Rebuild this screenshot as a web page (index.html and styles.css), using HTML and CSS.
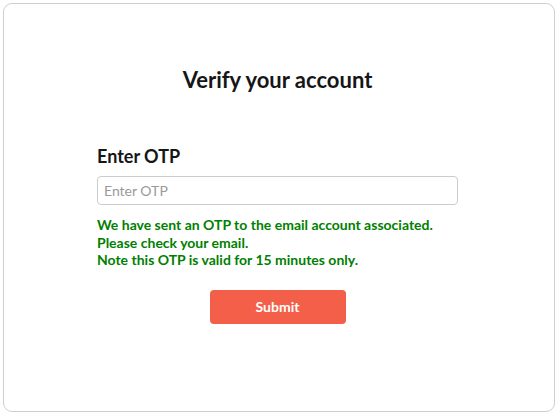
FILE: index.html
```html
<!DOCTYPE html>
<html>
<head>
<meta charset="utf-8">
<link rel="stylesheet" href="styles.css">
</head>
<body>
<div class="card">
  <h1 class="title">Verify your account</h1>
  <form class="form">
    <label class="label" for="otp">Enter OTP</label>
    <input class="input" id="otp" type="text" placeholder="Enter OTP">
    <p class="note">We have sent an OTP to the email account associated.<br>Please check your email.<br>Note this OTP is valid for 15 minutes only.</p>
    <div class="actions"><button class="submit" type="button">Submit</button></div>
  </form>
</div>
</body>
</html>
```
FILE: styles.css
```css
html, body { background: #fff; }
html { overflow: hidden; }
body {
  margin: 3px 0 0 3px;
  font-family: Lato, "Open Sans", sans-serif;
  color: #1a1a1a;
}
.card {
  box-sizing: border-box;
  width: 552px;
  height: 409px;
  border: 1px solid #cfcfcf;
  border-radius: 9px;
  padding-right: 3px;
  display: flex;
  flex-direction: column;
  align-items: center;
}
.title {
  margin: 63px 0 0 0;
  font-size: 22px;
  font-weight: 700;
  line-height: 26px;
  color: #161616;
}
.form {
  width: 361px;
  margin: 0;
  padding-top: 52px;
  display: flex;
  flex-direction: column;
}
.label {
  font-size: 18px;
  font-weight: 700;
  line-height: 22px;
  color: #161616;
}
.input {
  box-sizing: border-box;
  margin-top: 9px;
  height: 29px;
  width: 361px;
  border: 1px solid #cccccc;
  border-radius: 4px;
  padding: 0 6px;
  font-family: Lato, sans-serif;
  font-size: 14px;
  color: #333;
  outline: none;
}
.input::placeholder { color: #9a9a9a; }
.note {
  margin: 11px 0 0 0;
  font-size: 14px;
  font-weight: 700;
  line-height: 17.5px;
  color: #008000;
}
.actions {
  display: flex;
  justify-content: center;
  margin-top: 21px;
}
.submit {
  width: 136px;
  height: 34px;
  border: none;
  border-radius: 4px;
  background: #f35f48;
  color: #fff;
  font-family: Lato, sans-serif;
  font-size: 14px;
  font-weight: 700;
}
```
